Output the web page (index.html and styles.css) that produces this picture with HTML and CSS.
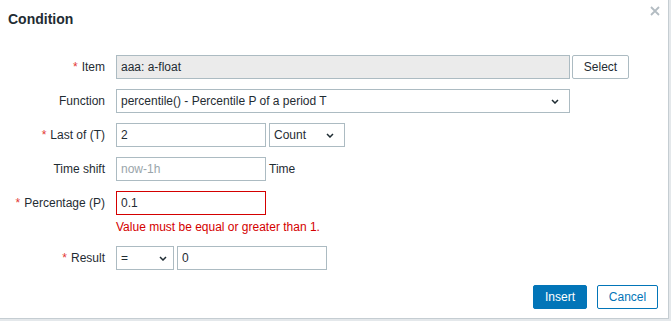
FILE: index.html
```html
<!DOCTYPE html>
<html lang="en">
<head>
  <meta charset="UTF-8">
  <title>Condition</title>
  <link rel="stylesheet" href="styles.css">
</head>
<body>

  <div class="dialog">
    <div class="dialog-head">
      <h3>Condition</h3>
      <button class="close" title="Close">
        <svg width="10" height="10" viewBox="0 0 10 10"><path d="M1 1L9 9M9 1L1 9" stroke="#b3bcc2" stroke-width="1.8"/></svg>
      </button>
    </div>

    <form class="form">
      <label class="req">Item</label>
      <div class="field">
        <div class="input readonly wide">aaa: a-float</div>
        <button type="button" class="btn-alt">Select</button>
      </div>

      <label>Function</label>
      <div class="field">
        <div class="select wide">
          <span>percentile() - Percentile P of a period T</span>
          <svg width="8" height="5" viewBox="0 0 8 5"><path d="M1 1L4 4L7 1" fill="none" stroke="#1f2c33" stroke-width="1.5"/></svg>
        </div>
      </div>

      <label class="req">Last of (T)</label>
      <div class="field">
        <div class="input">2</div>
        <div class="select count">
          <span>Count</span>
          <svg width="8" height="5" viewBox="0 0 8 5"><path d="M1 1L4 4L7 1" fill="none" stroke="#1f2c33" stroke-width="1.5"/></svg>
        </div>
      </div>

      <label>Time shift</label>
      <div class="field">
        <div class="input placeholder">now-1h</div>
        <span class="suffix">Time</span>
      </div>

      <label class="req">Percentage (P)</label>
      <div class="field column">
        <div class="input invalid">0.1</div>
        <div class="error">Value must be equal or greater than 1.</div>
      </div>

      <label class="req">Result</label>
      <div class="field">
        <div class="select op">
          <span>=</span>
          <svg width="8" height="5" viewBox="0 0 8 5"><path d="M1 1L4 4L7 1" fill="none" stroke="#1f2c33" stroke-width="1.5"/></svg>
        </div>
        <div class="input">0</div>
      </div>
    </form>

    <div class="dialog-foot">
      <button type="button" class="btn-main">Insert</button>
      <button type="button" class="btn-cancel">Cancel</button>
    </div>
  </div>

</body>
</html>
```

FILE: styles.css
```css
body {
  margin: 0;
  background-color: #e4e8eb;
  font-family: 'Liberation Sans', Arial, sans-serif;
  font-size: 12px;
  color: #1f2c33;
}
.dialog {
  position: relative;
  width: 669px;
  height: 319px;
  box-sizing: border-box;
  background: #fff;
  border-right: 1px solid #c5cdd2;
  border-bottom: 1px solid #c5cdd2;
}
.dialog-head {
  padding: 11px 8px 0;
}
.dialog-head h3 {
  margin: 0;
  font-size: 14px;
  line-height: 16px;
  font-weight: bold;
  color: #1f2c33;
}
.close {
  position: absolute;
  top: 6px;
  right: 8px;
  width: 10px;
  height: 10px;
  padding: 0;
  border: none;
  background: none;
  display: flex;
}
.form {
  display: grid;
  grid-template-columns: 105px auto;
  column-gap: 11px;
  row-gap: 10px;
  margin-top: 28px;
}
.form label {
  text-align: right;
  line-height: 24px;
  white-space: nowrap;
}
.form label.req::before {
  content: "*";
  color: #e33734;
  margin-right: 4px;
}
.field {
  display: flex;
  gap: 3px;
  align-items: center;
}
.field.column {
  flex-direction: column;
  align-items: flex-start;
  gap: 4px;
}
.input, .select {
  box-sizing: border-box;
  height: 24px;
  width: 150px;
  line-height: 22px;
  padding: 0 4px;
  border: 1px solid #acbbc2;
  background: #fff;
  white-space: nowrap;
}
.input.wide, .select.wide {
  width: 454px;
}
.input.readonly {
  background: #ebebeb;
}
.input.placeholder {
  color: #9aa5ab;
}
.input.invalid {
  border-color: #d40000;
}
.error {
  color: #d40000;
  line-height: 17px;
}
.suffix {
  line-height: 24px;
}
.select {
  display: flex;
  justify-content: space-between;
  align-items: center;
  padding-right: 10px;
}
.select.count {
  width: 76px;
}
.select.op {
  width: 58px;
  padding-right: 6px;
}
.field .input.readonly + .btn-alt {
  margin-left: -1px;
}
.btn-alt, .btn-main, .btn-cancel {
  box-sizing: border-box;
  height: 24px;
  padding: 0 10px;
  font-family: inherit;
  font-size: 12px;
  border-radius: 2px;
  cursor: pointer;
}
.btn-alt {
  width: 57px;
  background: #fff;
  border: 1px solid #acbbc2;
  color: #1f2c33;
}
.dialog-foot {
  position: absolute;
  right: 10px;
  bottom: 9px;
  display: flex;
  gap: 10px;
}
.btn-main {
  width: 54px;
  background: #0275b8;
  border: 1px solid #0275b8;
  color: #fff;
}
.btn-cancel {
  width: 61px;
  background: #fff;
  border: 1px solid #0275b8;
  color: #0275b8;
}
```
